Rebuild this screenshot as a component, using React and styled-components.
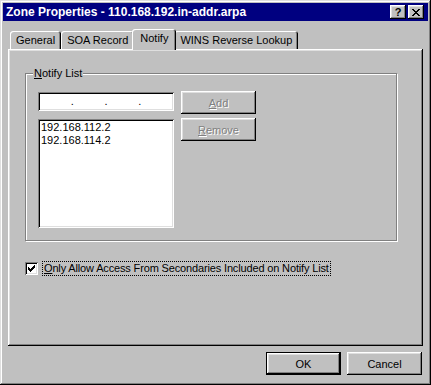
import React from 'react';
import styled, { createGlobalStyle } from 'styled-components';

const GlobalStyle = createGlobalStyle`
  html, body {
    margin: 0;
    padding: 0;
    background: #c0c0c0;
  }
  body {
    font-family: "Liberation Sans", Arial, sans-serif;
    font-size: 11px;
    color: #000;
  }
`;

const raised = `
  box-shadow: inset -1px -1px #000, inset 1px 1px #fff,
    inset -2px -2px #808080, inset 2px 2px #dfdfdf;
`;

const sunken = `
  box-shadow: inset 1px 1px #808080, inset -1px -1px #fff,
    inset 2px 2px #000, inset -2px -2px #dfdfdf;
`;

const Window = styled.div`
  width: 431px;
  height: 385px;
  box-sizing: border-box;
  padding: 3px;
  background: #c0c0c0;
  box-shadow: inset -1px -1px #000, inset 1px 1px #dfdfdf,
    inset -2px -2px #808080, inset 2px 2px #fff;
  display: flex;
  flex-direction: column;
`;

const TitleBar = styled.div`
  height: 18px;
  background: #000080;
  color: #fff;
  display: flex;
  align-items: center;
  padding: 0 4px 0 3px;
  font-weight: bold;
  font-size: 12px;
`;

const Title = styled.span`
  flex: 1;
  white-space: nowrap;
`;

const TitleButton = styled.div`
  width: 16px;
  height: 14px;
  background: #c0c0c0;
  ${raised}
  display: flex;
  align-items: center;
  justify-content: center;
  color: #000;
  font-size: 11px;
  font-weight: bold;
  & + & {
    margin-left: 2px;
  }
`;

const Body = styled.div`
  flex: 1;
  display: flex;
  flex-direction: column;
  padding: 8px 5px 0 5px;
`;

const TabStrip = styled.div`
  height: 20px;
  display: flex;
  align-items: flex-end;
  padding-left: 2px;
`;

const Tab = styled.div`
  position: relative;
  height: ${(p) => (p.$active ? '21px' : '18px')};
  margin: ${(p) => (p.$active ? '0 -2px -1px' : '0')};
  z-index: ${(p) => (p.$active ? 1 : 0)};
  padding: ${(p) => (p.$active ? '0 8px' : '0 6px')};
  box-sizing: border-box;
  background: #c0c0c0;
  border-radius: 3px 3px 0 0;
  box-shadow: inset 1px 1px #fff, inset -1px 0 #000, inset -2px 0 #808080;
  display: flex;
  align-items: ${(p) => (p.$active ? 'flex-start' : 'center')};
  padding-top: ${(p) => (p.$active ? '3px' : '0')};
  white-space: nowrap;
`;

const Panel = styled.div`
  width: 415px;
  height: 297px;
  box-sizing: border-box;
  background: #c0c0c0;
  box-shadow: inset -1px -1px #000, inset 1px 1px #fff,
    inset -2px -2px #808080, inset 2px 2px #dfdfdf;
  padding: 18px 0 0 17px;
  display: flex;
  flex-direction: column;
`;

const GroupBox = styled.fieldset`
  margin: 0;
  width: 372px;
  box-sizing: border-box;
  padding: 12px 12px 12px 12px;
  border: 1px solid #808080;
  box-shadow: inset 1px 1px #fff, 1px 1px #fff;
  min-width: 0;
`;

const Legend = styled.legend`
  padding: 0 1px;
  margin-left: -5px;
  line-height: 13px;
  background: #c0c0c0;
`;

const Key = styled.span`
  text-decoration: underline;
`;

const GroupRow = styled.div`
  display: flex;
  gap: 7px;
`;

const LeftColumn = styled.div`
  width: 136px;
  display: flex;
  flex-direction: column;
  gap: 8px;
`;

const RightColumn = styled.div`
  display: flex;
  flex-direction: column;
  gap: 4px;
  margin-top: -1px;
`;

const IpField = styled.div`
  height: 19px;
  box-sizing: border-box;
  background: #fff;
  ${sunken}
  padding: 0 2px;
  display: flex;
  align-items: center;
`;

const IpSegment = styled.span`
  flex: 1;
`;

const IpDot = styled.span`
  width: 3px;
  text-align: center;
  line-height: 13px;
`;

const ListBox = styled.div`
  height: 109px;
  box-sizing: border-box;
  background: #fff;
  ${sunken}
  padding: 2px 3px;
`;

const ListItem = styled.div`
  line-height: 13px;
  white-space: nowrap;
`;

const Button = styled.div`
  width: 75px;
  height: 23px;
  box-sizing: border-box;
  background: #c0c0c0;
  display: flex;
  align-items: center;
  justify-content: center;
  ${(p) =>
    p.$default
      ? `box-shadow: inset 0 0 0 1px #000, inset -2px -2px #000, inset 2px 2px #fff,
          inset -3px -3px #808080, inset 3px 3px #dfdfdf;`
      : raised}
  color: ${(p) => (p.$disabled ? '#808080' : '#000')};
  text-shadow: ${(p) => (p.$disabled ? '1px 1px 0 #fff' : 'none')};
`;

const CheckRow = styled.div`
  display: flex;
  align-items: center;
  gap: 4px;
  margin-top: 20px;
`;

const CheckBox = styled.div`
  width: 13px;
  height: 13px;
  box-sizing: border-box;
  background: #fff;
  ${sunken}
  display: flex;
  align-items: center;
  justify-content: center;
`;

const CheckLabel = styled.span`
  border: 1px dotted #000;
  padding: 0 1px;
  line-height: 13px;
  letter-spacing: -0.15px;
  white-space: nowrap;
`;

const Footer = styled.div`
  display: flex;
  justify-content: flex-end;
  gap: 6px;
  padding: 6px 1px 0 0;
`;

const closeRows = [
  [0, 2, 6, 2],
  [1, 2, 5, 2],
  [2, 4],
  [3, 2],
  [2, 4],
  [1, 2, 5, 2],
  [0, 2, 6, 2],
];

const CloseGlyph = () => (
  <svg width="8" height="7" viewBox="0 0 8 7" shapeRendering="crispEdges">
    {closeRows.map((r, y) => (
      <g key={y}>
        <rect x={r[0]} y={y} width={r[1]} height="1" fill="#000" />
        {r.length > 2 && <rect x={r[2]} y={y} width={r[3]} height="1" fill="#000" />}
      </g>
    ))}
  </svg>
);

const CheckGlyph = () => (
  <svg width="7" height="7" viewBox="0 0 7 7" shapeRendering="crispEdges">
    <path d="M6 0h1v3h-1v1h-1v1h-1v1h-1v1h-1v-1h-1v-1h-1v-3h1v1h1v1h1v-1h1v-1h1z" fill="#000" />
  </svg>
);

const tabs = ['General', 'SOA Record', 'Notify', 'WINS Reverse Lookup'];
const servers = ['192.168.112.2', '192.168.114.2'];

export default function App() {
  return (
    <>
      <GlobalStyle />
      <Window>
        <TitleBar>
          <Title>Zone Properties - 110.168.192.in-addr.arpa</Title>
          <TitleButton>?</TitleButton>
          <TitleButton>
            <CloseGlyph />
          </TitleButton>
        </TitleBar>
        <Body>
          <TabStrip>
            {tabs.map((t) => (
              <Tab key={t} $active={t === 'Notify'}>
                {t}
              </Tab>
            ))}
          </TabStrip>
          <Panel>
            <GroupBox>
              <Legend>
                <Key>N</Key>otify List
              </Legend>
              <GroupRow>
                <LeftColumn>
                  <IpField>
                    <IpSegment />
                    <IpDot>.</IpDot>
                    <IpSegment />
                    <IpDot>.</IpDot>
                    <IpSegment />
                    <IpDot>.</IpDot>
                    <IpSegment />
                  </IpField>
                  <ListBox>
                    {servers.map((s) => (
                      <ListItem key={s}>{s}</ListItem>
                    ))}
                  </ListBox>
                </LeftColumn>
                <RightColumn>
                  <Button $disabled>
                    <span>
                      <Key>A</Key>dd
                    </span>
                  </Button>
                  <Button $disabled>
                    <span>
                      <Key>R</Key>emove
                    </span>
                  </Button>
                </RightColumn>
              </GroupRow>
            </GroupBox>
            <CheckRow>
              <CheckBox>
                <CheckGlyph />
              </CheckBox>
              <CheckLabel>
                <Key>O</Key>nly Allow Access From Secondaries Included on Notify List
              </CheckLabel>
            </CheckRow>
          </Panel>
          <Footer>
            <Button $default>OK</Button>
            <Button>Cancel</Button>
          </Footer>
        </Body>
      </Window>
    </>
  );
}
